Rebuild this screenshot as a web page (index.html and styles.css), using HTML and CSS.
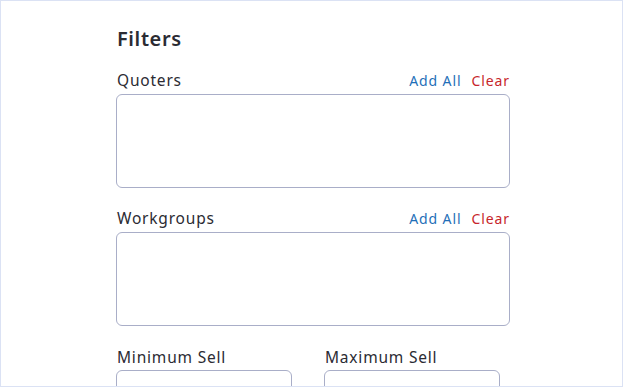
FILE: index.html
```html
<!DOCTYPE html>
<html lang="en">
<head>
    <meta charset="UTF-8">
    <title>Filters</title>
    <link rel="stylesheet" href="styles.css">
</head>
<body>
    <div class="frame">
        <div class="filters">
            <h2>Filters</h2>

            <!-- quoters -->
            <div class="field">
                <div class="field-head">
                    <label>Quoters</label>
                    <div class="actions">
                        <a class="add-all">Add All</a>
                        <a class="clear">Clear</a>
                    </div>
                </div>
                <div class="picker"></div>
            </div>

            <!-- workgroups -->
            <div class="field">
                <div class="field-head">
                    <label>Workgroups</label>
                    <div class="actions">
                        <a class="add-all">Add All</a>
                        <a class="clear">Clear</a>
                    </div>
                </div>
                <div class="picker"></div>
            </div>

            <div class="sell-row">
                <div class="sell">
                    <label>Minimum Sell</label>
                    <input type="text">
                </div>
                <div class="sell">
                    <label>Maximum Sell</label>
                    <input type="text">
                </div>
            </div>
        </div>
    </div>
</body>
</html>
```

FILE: styles.css
```css
html, body {
    margin: 0;
    height: 100%;
    overflow: hidden;
}
body {
    font-family: "Noto Sans", Arial, sans-serif;
    color: #2b2b33;
    background: #fff;
}
.frame {
    box-sizing: border-box;
    height: 387px;
    border: 1px solid #dbe2f4;
    overflow: hidden;
}
.filters {
    width: 394px;
    margin: 0 auto;
    padding-top: 24px;
    padding-left: 3px;
}
h2 {
    margin: 0 0 16px 1px;
    font-size: 20px;
    font-weight: 600;
    letter-spacing: 0.6px;
    line-height: 28px;
}
.field {
    margin-bottom: 19px;
}
.field-head {
    display: flex;
    justify-content: space-between;
    align-items: baseline;
    height: 25px;
}
label {
    font-size: 15.5px;
    letter-spacing: 0.8px;
    line-height: 22px;
    padding-left: 1px;
}
.actions {
    display: flex;
    gap: 10px;
    font-size: 14px;
    letter-spacing: 0.9px;
}
.add-all {
    color: #1f6fb8;
}
.clear {
    color: #c7262b;
}
.picker {
    box-sizing: border-box;
    height: 94px;
    border: 1px solid #a9aec8;
    border-radius: 6px;
}
.sell-row {
    display: grid;
    grid-template-columns: 176px 176px;
    gap: 32px;
    padding-top: 1px;
}
.sell label {
    display: block;
    height: 24px;
}
.sell input {
    box-sizing: border-box;
    width: 176px;
    height: 36px;
    border: 1px solid #a9aec8;
    border-radius: 6px;
}
```
